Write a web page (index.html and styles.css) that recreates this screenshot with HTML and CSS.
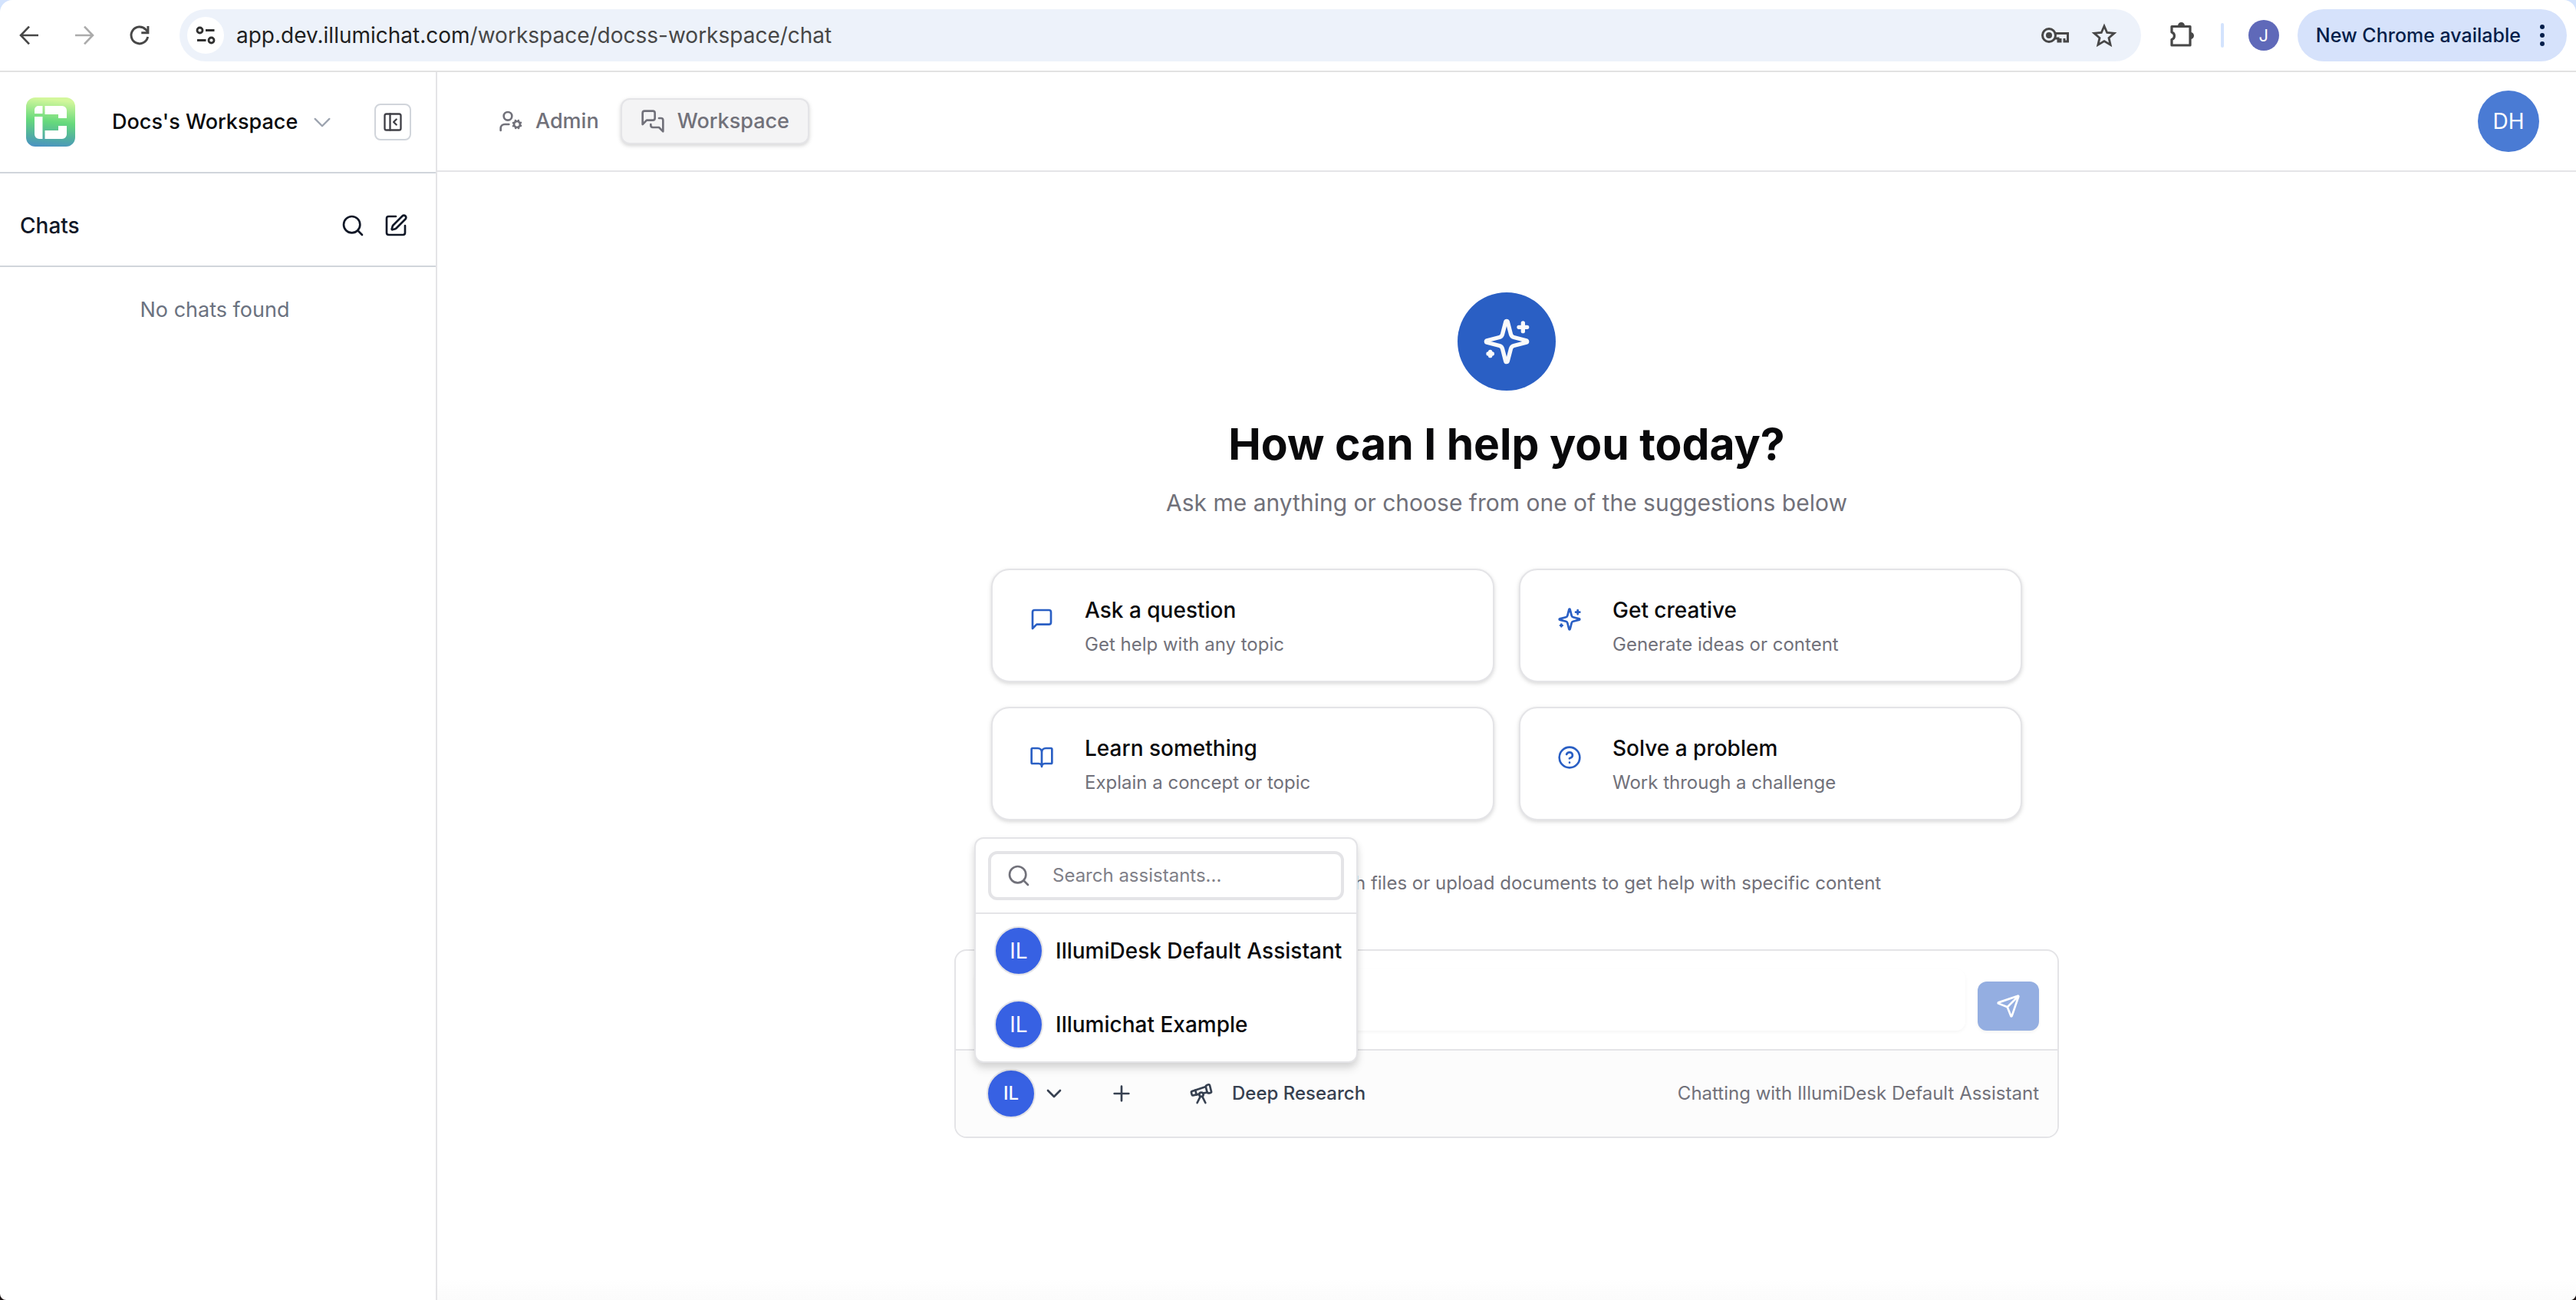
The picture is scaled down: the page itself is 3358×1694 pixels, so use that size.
FILE: index.html
```html
<!DOCTYPE html>
<html lang="en">
<head>
<meta charset="utf-8">
<title>Docs's Workspace - Chat</title>
<link rel="stylesheet" href="styles.css">
</head>
<body>
<div class="window">
  <div class="browser-bar">
    <div class="nav-buttons">
      <button class="icon-button" aria-label="Back"><svg class="icon-32" viewBox="0 0 24 24" fill="none" stroke="#474747" stroke-width="2"><path d="M21 12H4M12 3.500L3.800 12l8.200 8.500"/></svg></button>
      <button class="icon-button" aria-label="Forward" disabled><svg class="icon-32" viewBox="0 0 24 24" fill="none" stroke="#ababab" stroke-width="2"><path d="M3 12h17M12 3.500l8.200 8.500-8.200 8.500"/></svg></button>
      <button class="icon-button" aria-label="Reload"><svg class="icon-32" viewBox="0 0 24 24" fill="none" stroke="#474747" stroke-width="2.200"><path d="M20 13.500A8.200 8.200 0 1 1 18 6.400L20 8.500"/><path d="M20.200 3v6.500H13.700"/></svg></button>
    </div>
    <div class="omnibox">
      <button class="site-info" aria-label="Site information"><svg class="icon-32" viewBox="0 0 32 32" fill="none" stroke="#303030" stroke-width="2.800"><circle cx="8.500" cy="9.500" r="3.500"/><path d="M16 9.500h11.500M5 22.500h11.500"/><circle cx="23.500" cy="22.500" r="3.500"/></svg></button>
      <div class="address"><span class="host">app.dev.illumichat.com</span>/workspace/docss-workspace/chat</div>
      <button class="icon-button" aria-label="Passwords"><svg class="icon-40" viewBox="0 0 40 40" fill="none" stroke="#474747" stroke-width="3"><circle cx="12" cy="20" r="8.500"/><circle cx="12" cy="20" r="4" fill="#474747" stroke="none"/><path d="M19.500 17.500H36.500V28H32v-4M27 24v4h-3v-4h-4.500"/></svg></button>
      <button class="icon-button" aria-label="Bookmark"><svg class="icon-40" viewBox="0 0 40 40" fill="none" stroke="#474747" stroke-width="2.800"><path d="M20 8l3.700 8.500 9.300.800-7 6.100 2.100 9L20 27.600l-8.100 4.800 2.100-9-7-6.100 9.300-.800z"/></svg></button>
    </div>
    <button class="icon-button extensions" aria-label="Extensions"><svg class="icon-40" viewBox="0 0 40 40" fill="none" stroke="#474747" stroke-width="3.200" stroke-linejoin="round"><path d="M6 8.500h24v24.500H6v-7.500a5 5 0 0 0 0-9.500z"/><path d="M14 7.500a4.500 4.500 0 0 1 9 0zM30.500 16a4.500 4.500 0 0 1 0 9z" fill="#474747" stroke="none"/></svg></button>
    <span class="bar-divider"></span>
    <button class="profile" aria-label="Profile">J</button>
    <button class="update-chip">New Chrome available
      <svg class="dots" viewBox="0 0 8 32" fill="#041e49"><circle cx="4" cy="5" r="3"/><circle cx="4" cy="16" r="3"/><circle cx="4" cy="27" r="3"/></svg>
    </button>
  </div>

  <div class="app">
    <aside class="sidebar">
      <div class="workspace-row">
        <svg class="logo" viewBox="0 0 64 64">
          <defs><linearGradient id="logo-fill" x1=".1" y1="0" x2="0" y2="1"><stop offset="0" stop-color="#d3f79c"/><stop offset=".45" stop-color="#66d97c"/><stop offset=".75" stop-color="#52b0a0"/><stop offset="1" stop-color="#4a8fc6"/></linearGradient></defs>
          <rect width="64" height="64" rx="12" fill="url(#logo-fill)"/>
          <path fill="#fff" d="M16 11h5.500v10H11v-5a5 5 0 0 1 5-5zM11 25h10.500v29H17a6 6 0 0 1-6-6zM24.500 11H47a6 6 0 0 1 6 6v10H42v-5H24.500zM24.500 43H42v-6h11v11a6 6 0 0 1-6 6H24.500z"/>
        </svg>
        <button class="workspace-switch">Docs's Workspace
          <svg class="icon-28" viewBox="0 0 24 24" fill="none" stroke="#9ca3af" stroke-width="2" stroke-linecap="round" stroke-linejoin="round"><path d="m4 8.500 8 8 8-8"/></svg>
        </button>
        <button class="collapse" aria-label="Collapse sidebar"><svg class="icon-28" viewBox="0 0 24 24" fill="none" stroke="#3f3f46" stroke-width="2" stroke-linecap="round" stroke-linejoin="round"><rect x="3" y="3" width="18" height="18" rx="2"/><path d="M9 3v18M16 15l-3-3 3-3"/></svg></button>
      </div>
      <div class="chats-row">
        <h2 class="chats-title">Chats</h2>
        <button class="icon-button" aria-label="Search chats"><svg class="icon-32" viewBox="0 0 24 24" fill="none" stroke="currentColor" stroke-width="2" stroke-linecap="round" stroke-linejoin="round"><circle cx="11" cy="11" r="8"/><path d="m21 21-4.300-4.300"/></svg></button>
        <button class="icon-button" aria-label="New chat"><svg class="icon-32" viewBox="0 0 24 24" fill="none" stroke="currentColor" stroke-width="2" stroke-linecap="round" stroke-linejoin="round"><path d="M12 3H5a2 2 0 0 0-2 2v14a2 2 0 0 0 2 2h14a2 2 0 0 0 2-2v-7"/><path d="M18.375 2.625a1 1 0 0 1 3 3l-9.013 9.014a2 2 0 0 1-.853.505l-2.873.840a.500.500 0 0 1-.620-.620l.840-2.873a2 2 0 0 1 .506-.852z"/></svg></button>
      </div>
      <p class="empty">No chats found</p>
    </aside>

    <main class="main">
      <header class="topbar">
        <nav class="tabs">
          <a class="tab" href="#admin"><svg class="icon-32" viewBox="0 0 24 24" fill="none" stroke="currentColor" stroke-width="2" stroke-linecap="round" stroke-linejoin="round"><circle cx="18" cy="15" r="3"/><circle cx="9" cy="7" r="4"/><path d="M10 15H6a4 4 0 0 0-4 4v2M21.700 16.400l-.900-.300M15.200 13.900l-.900-.300M16.600 18.700l.300-.900M19.100 12.200l.300-.900M19.600 18.700l-.400-1M16.800 12.300l-.400-1M14.300 16.600l1-.400M20.700 13.800l1-.400"/></svg>Admin</a>
          <a class="tab active" href="#workspace"><svg class="icon-32" viewBox="0 0 24 24" fill="none" stroke="currentColor" stroke-width="2" stroke-linecap="round" stroke-linejoin="round"><path d="M14 9a2 2 0 0 1-2 2H6l-4 4V4a2 2 0 0 1 2-2h8a2 2 0 0 1 2 2z"/><path d="M18 9h2a2 2 0 0 1 2 2v11l-4-4h-6a2 2 0 0 1-2-2v-1"/></svg>Workspace</a>
        </nav>
        <button class="account">DH</button>
      </header>

      <section class="content">
        <div class="hero-badge"><svg class="icon-64" viewBox="0 0 24 24" fill="none" stroke="currentColor" stroke-width="2" stroke-linecap="round" stroke-linejoin="round"><path d="M9.937 15.500A2 2 0 0 0 8.500 14.063l-6.135-1.582a.500.500 0 0 1 0-.962L8.500 9.936A2 2 0 0 0 9.937 8.500l1.582-6.135a.500.500 0 0 1 .963 0L14.063 8.500A2 2 0 0 0 15.500 9.937l6.135 1.581a.500.500 0 0 1 0 .964L15.500 14.063a2 2 0 0 0-1.437 1.437l-1.582 6.135a.500.500 0 0 1-.963 0z"/><path d="M20 3v4M22 5h-4M4 17v2M5 18H3"/></svg></div>
        <h1 class="headline">How can I help you today?</h1>
        <p class="subline">Ask me anything or choose from one of the suggestions below</p>

        <div class="cards">
          <button class="card">
            <span class="card-icon"><svg class="icon-32" viewBox="0 0 24 24" fill="none" stroke="currentColor" stroke-width="2" stroke-linecap="round" stroke-linejoin="round"><path d="M21 15a2 2 0 0 1-2 2H7l-4 4V5a2 2 0 0 1 2-2h14a2 2 0 0 1 2 2z"/></svg></span>
            <span class="card-text"><span class="card-title">Ask a question</span><span class="card-desc">Get help with any topic</span></span>
          </button>
          <button class="card">
            <span class="card-icon"><svg class="icon-32" viewBox="0 0 24 24" fill="none" stroke="currentColor" stroke-width="2" stroke-linecap="round" stroke-linejoin="round"><path d="M9.937 15.500A2 2 0 0 0 8.500 14.063l-6.135-1.582a.500.500 0 0 1 0-.962L8.500 9.936A2 2 0 0 0 9.937 8.500l1.582-6.135a.500.500 0 0 1 .963 0L14.063 8.500A2 2 0 0 0 15.500 9.937l6.135 1.581a.500.500 0 0 1 0 .964L15.500 14.063a2 2 0 0 0-1.437 1.437l-1.582 6.135a.500.500 0 0 1-.963 0z"/><path d="M20 3v4M22 5h-4M4 17v2M5 18H3"/></svg></span>
            <span class="card-text"><span class="card-title">Get creative</span><span class="card-desc">Generate ideas or content</span></span>
          </button>
          <button class="card">
            <span class="card-icon"><svg class="icon-32" viewBox="0 0 24 24" fill="none" stroke="currentColor" stroke-width="2" stroke-linecap="round" stroke-linejoin="round"><path d="M12 7v14M3 18a1 1 0 0 1-1-1V4a1 1 0 0 1 1-1h5a4 4 0 0 1 4 4 4 4 0 0 1 4-4h5a1 1 0 0 1 1 1v13a1 1 0 0 1-1 1h-6a3 3 0 0 0-3 3 3 3 0 0 0-3-3z"/></svg></span>
            <span class="card-text"><span class="card-title">Learn something</span><span class="card-desc">Explain a concept or topic</span></span>
          </button>
          <button class="card">
            <span class="card-icon"><svg class="icon-32" viewBox="0 0 24 24" fill="none" stroke="currentColor" stroke-width="2" stroke-linecap="round" stroke-linejoin="round"><circle cx="12" cy="12" r="10"/><path d="M9.090 9a3 3 0 0 1 5.830 1c0 2-3 3-3 3M12 17h.010"/></svg></span>
            <span class="card-text"><span class="card-title">Solve a problem</span><span class="card-desc">Work through a challenge</span></span>
          </button>
        </div>

        <p class="hint">Tip: You can also chat with files or upload documents to get help with specific content</p>

        <form class="composer">
          <div class="compose-row">
            <textarea class="message" aria-label="Message"></textarea>
            <button class="send" type="button" aria-label="Send" disabled><svg class="icon-32" viewBox="0 0 24 24" fill="none" stroke="currentColor" stroke-width="2" stroke-linecap="round" stroke-linejoin="round"><path d="M14.536 21.686a.500.500 0 0 0 .937-.024l6.500-19a.496.496 0 0 0-.635-.635l-19 6.500a.500.500 0 0 0-.024.937l7.930 3.180a2 2 0 0 1 1.112 1.110zM21.854 2.147l-10.940 10.939"/></svg></button>
          </div>
          <div class="tools-row">
            <div class="assistant">
              <button class="assistant-toggle" type="button" aria-expanded="true" aria-label="Choose assistant"><span class="avatar avatar-small">IL</span><svg class="icon-32" viewBox="0 0 24 24" fill="none" stroke="currentColor" stroke-width="2" stroke-linecap="round" stroke-linejoin="round"><path d="m6 9 6 6 6-6"/></svg></button>
              <div class="menu">
                <div class="menu-search">
                  <label class="search-box"><svg class="icon-32" viewBox="0 0 24 24" fill="none" stroke="currentColor" stroke-width="2" stroke-linecap="round" stroke-linejoin="round"><circle cx="11" cy="11" r="8"/><path d="m21 21-4.300-4.300"/></svg><input class="search-input" type="text" placeholder="Search assistants..." aria-label="Search assistants"></label>
                </div>
                <button class="menu-item" type="button"><span class="avatar">IL</span>IllumiDesk Default Assistant</button>
                <button class="menu-item" type="button"><span class="avatar">IL</span>Illumichat Example</button>
              </div>
            </div>
            <button class="tool" type="button" aria-label="Add attachment"><svg class="icon-32" viewBox="0 0 24 24" fill="none" stroke="currentColor" stroke-width="2" stroke-linecap="round" stroke-linejoin="round"><path d="M5 12h14M12 5v14"/></svg></button>
            <button class="tool" type="button"><svg class="icon-32" viewBox="0 0 24 24" fill="none" stroke="currentColor" stroke-width="2" stroke-linecap="round" stroke-linejoin="round"><path d="m10.065 12.493-6.180 1.318a.934.934 0 0 1-1.108-.702l-.537-2.150a1.070 1.070 0 0 1 .691-1.265l13.504-4.440M13.560 11.747l4.332-.924M16 21l-3.105-6.210"/><path d="M16.485 5.940a2 2 0 0 1 1.455-2.425l1.090-.272a1 1 0 0 1 1.212.727l1.515 6.060a1 1 0 0 1-.727 1.213l-1.090.272a2 2 0 0 1-2.425-1.455zM6.158 8.633l1.114 4.456M8 21l3.105-6.210"/><circle cx="12" cy="13" r="2"/></svg>Deep Research</button>
            <span class="status">Chatting with IllumiDesk Default Assistant</span>
          </div>
        </form>
      </section>
    </main>
  </div>
</div>
</body>
</html>
```
FILE: styles.css
```css
* { box-sizing: border-box; }

body {
  margin: 0;
  background: linear-gradient(#d3e3fd 50%, #1c1414 50%);
  color: #09090b;
  font-family: Inter, "Liberation Sans", sans-serif;
  font-size: 28px;
  line-height: 40px;
}

h1, h2, p { margin: 0; }

button {
  margin: 0;
  padding: 0;
  border: 0;
  background: none;
  color: inherit;
  font: inherit;
  text-align: left;
}

a { color: inherit; text-decoration: none; }

svg { display: block; flex: none; }

.icon-28 { width: 28px; height: 28px; }
.icon-32 { width: 32px; height: 32px; }
.icon-40 { width: 40px; height: 40px; }
.icon-64 { width: 64px; height: 64px; }

.window {
  display: flex;
  flex-direction: column;
  min-height: 100vh;
  overflow: hidden;
  border-radius: 16px 16px 8px 8px;
  background: #fff;
}

/* Browser toolbar */
.browser-bar {
  display: flex;
  align-items: center;
  padding: 12px 12px 12px 22px;
  border-bottom: 2px solid #e2e2e2;
}

.nav-buttons { display: flex; gap: 40px; margin-right: 36px; }

.omnibox {
  display: flex;
  flex: 1;
  align-items: center;
  gap: 24px;
  height: 68px;
  padding: 0 28px 0 10px;
  border-radius: 34px;
  background: #edf2fa;
}

.site-info {
  display: flex;
  align-items: center;
  justify-content: center;
  width: 48px;
  height: 48px;
  margin-right: -8px;
  border-radius: 50%;
  background: #fff;
}

.address { flex: 1; color: #474747; }
.host { color: #1f1f1f; }

.extensions { margin-left: 34px; }

.bar-divider {
  width: 4px;
  height: 32px;
  margin: 0 32px 0 30px;
  border-radius: 2px;
  background: #d3e3fd;
}

.profile {
  width: 40px;
  height: 40px;
  margin-right: 24px;
  border-radius: 50%;
  background: #5f69b9;
  color: #fff;
  font-size: 22px;
  text-align: center;
}

.update-chip {
  display: flex;
  align-items: center;
  justify-content: space-between;
  gap: 24px;
  height: 68px;
  padding: 0 28px 0 24px;
  border-radius: 34px;
  background: #d6e2fb;
  color: #041e49;
  font-size: 25px;
  font-weight: 500;
}

.dots { width: 8px; height: 32px; }

/* App shell */
.app { display: flex; flex: 1; }

.sidebar {
  width: 570px;
  flex: none;
  border-right: 2px solid #e4e4e7;
}

.workspace-row {
  display: flex;
  align-items: center;
  height: 132px;
  padding: 0 32px 0 34px;
  border-bottom: 2px solid #d1d5db;
}

.logo { width: 64px; height: 64px; margin-right: 48px; }

.workspace-switch {
  display: flex;
  flex: 1;
  align-items: center;
  gap: 18px;
  font-size: 27px;
  font-weight: 500;
}

.collapse {
  display: flex;
  align-items: center;
  justify-content: center;
  width: 48px;
  height: 48px;
  border: 2px solid #d1d5db;
  border-radius: 8px;
}

.chats-row {
  display: flex;
  align-items: center;
  gap: 24px;
  height: 122px;
  padding: 16px 36px 0 26px;
  border-bottom: 2px solid #d1d5db;
  color: #111827;
}

.chats-title { flex: 1; font-size: 28px; font-weight: 500; }

.empty {
  padding: 36px 8px 0 0;
  color: #6b7280;
  font-size: 27px;
  text-align: center;
}

.main { display: flex; flex: 1; flex-direction: column; min-width: 0; }

.topbar {
  display: flex;
  align-items: center;
  justify-content: space-between;
  height: 130px;
  padding: 0 48px 0 54px;
  border-bottom: 2px solid #e4e4e7;
}

.tabs { display: flex; gap: 2px; }

.tab {
  display: flex;
  align-items: center;
  gap: 16px;
  padding: 8px 24px;
  border: 2px solid transparent;
  border-radius: 12px;
  color: #71717a;
  font-size: 27px;
  font-weight: 500;
}

.active {
  border-color: #e4e4e7;
  background: #f4f4f5;
  box-shadow: 0 2px 6px rgba(0, 0, 0, .1), 0 2px 4px rgba(0, 0, 0, .08);
}

.account {
  width: 80px;
  height: 80px;
  border-radius: 50%;
  background: #4a7bd4;
  color: #fff;
  text-align: center;
}

/* Welcome content */
.content {
  display: flex;
  flex: 1;
  flex-direction: column;
  align-items: center;
  padding: 157px 48px 48px;
  background: linear-gradient(#fff calc(100% - 28px), #fbfbfb);
}

.hero-badge {
  display: flex;
  align-items: center;
  justify-content: center;
  width: 128px;
  height: 128px;
  margin-bottom: 34px;
  border-radius: 50%;
  background: #2a5fc4;
  color: #fafafa;
}

.headline {
  margin-bottom: 16px;
  font-size: 57px;
  font-weight: 700;
  line-height: 72px;
}

.subline { color: #71717a; font-size: 30px; line-height: 48px; }

.cards {
  display: grid;
  grid-template-columns: 1fr 1fr;
  gap: 32px;
  width: 100%;
  max-width: 1344px;
  margin-top: 62px;
}

.card {
  display: flex;
  gap: 24px;
  padding: 32px;
  border: 2px solid #e4e4e7;
  border-radius: 24px;
  background: #fff;
  box-shadow: 0 2px 6px rgba(0, 0, 0, .1), 0 2px 4px rgba(0, 0, 0, .06);
}

.card-icon { align-self: flex-start; padding: 16px; color: #2a5fc4; }
.card-text { display: flex; flex-direction: column; gap: 10px; }
.card-title { font-weight: 500; }
.card-desc { color: #71717a; font-size: 24px; line-height: 30px; }

.hint {
  margin-top: 66px;
  color: #71717a;
  font-size: 24px;
  line-height: 32px;
}

/* Message composer */
.composer {
  width: 100%;
  max-width: 1440px;
  margin-top: 70px;
  border: 2px solid #e4e4e7;
  border-radius: 16px;
  background: #fff;
}

.compose-row { display: flex; align-items: flex-end; gap: 16px; padding: 24px; }

.message {
  flex: 1;
  height: 80px;
  border: 0;
  border-radius: 12px;
  outline: 0;
  background: #fff;
  box-shadow: 0 2px 4px rgba(0, 0, 0, .04);
  font: inherit;
  resize: none;
}

.send {
  display: flex;
  align-items: center;
  justify-content: center;
  width: 80px;
  height: 64px;
  border-radius: 12px;
  background: #94aee1;
  color: #fff;
  box-shadow: 0 2px 4px rgba(0, 0, 0, .05);
}

.tools-row {
  display: flex;
  align-items: center;
  height: 114px;
  padding: 0 24px;
  border-top: 2px solid #e4e4e7;
  border-radius: 0 0 14px 14px;
  background: #fcfcfc;
  color: #374151;
  font-size: 24px;
}

.assistant { position: relative; }

.assistant-toggle { display: flex; align-items: center; gap: 8px; padding: 0 16px; }

.avatar {
  display: flex;
  flex: none;
  align-items: center;
  justify-content: center;
  width: 64px;
  height: 64px;
  border: 2px solid #e4e4e7;
  border-radius: 50%;
  background: #3761e3;
  color: #fff;
  font-size: 28px;
  font-weight: 400;
}

.avatar-small { font-size: 24px; font-weight: 500; }

.tool {
  display: flex;
  align-items: center;
  gap: 24px;
  padding: 16px 32px 16px 40px;
  font-weight: 500;
}

.status { margin-left: auto; color: #71717a; }

/* Assistant picker */
.menu {
  position: absolute;
  bottom: calc(100% + 8px);
  left: 0;
  width: 500px;
  border: 2px solid #e4e4e7;
  border-radius: 12px;
  background: #fff;
  box-shadow: 0 8px 12px rgba(0, 0, 0, .1), 0 4px 8px rgba(0, 0, 0, .08);
  color: #09090b;
}

.menu-search { padding: 16px; border-bottom: 2px solid #e4e4e7; }

.search-box {
  display: flex;
  align-items: center;
  gap: 28px;
  height: 64px;
  padding: 0 20px;
  border: 4px solid #e4e4e7;
  border-radius: 12px;
  color: #71717a;
}

.search-input {
  flex: 1;
  min-width: 0;
  padding: 0;
  border: 0;
  outline: 0;
  background: none;
  font: inherit;
}

.search-input::placeholder { color: #808088; opacity: 1; }

.menu-item {
  display: flex;
  align-items: center;
  gap: 16px;
  width: 100%;
  padding: 16px 16px 16px 24px;
  font-size: 28px;
  font-weight: 500;
  white-space: nowrap;
}
```
